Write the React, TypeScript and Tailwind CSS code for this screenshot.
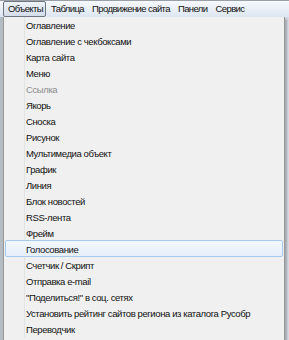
const topMenu = ["Объекты", "Таблица", "Продвижение сайта", "Панели", "Сервис"];

const items = [
  { label: "Оглавление" },
  { label: "Оглавление с чекбоксами" },
  { label: "Карта сайта" },
  { label: "Меню" },
  { label: "Ссылка", disabled: true },
  { label: "Якорь" },
  { label: "Сноска" },
  { label: "Рисунок" },
  { label: "Мультимедиа объект" },
  { label: "График" },
  { label: "Линия" },
  { label: "Блок новостей" },
  { label: "RSS-лента" },
  { label: "Фрейм" },
  { label: "Голосование", hover: true },
  { label: "Счетчик / Скрипт" },
  { label: "Отправка e-mail" },
  { label: "\"Поделиться!\" в соц. сетях" },
  { label: "Установить рейтинг сайтов региона из каталога Русобр" },
  { label: "Переводчик" },
];

export default function App() {
  return (
    <div
      className="h-[340px] w-[289px] overflow-hidden bg-[#c9cdd2] text-[9.5px] tracking-[-0.4px] text-[#111]"
      style={{ fontFamily: '"Liberation Sans", Arial, sans-serif' }}
    >
      <div className="flex h-[17px] items-center border-t border-[#9aa0a8] bg-gradient-to-b from-[#f6f9fd] to-[#dde6f1] pl-[3px] tracking-[-0.6px]">
        {topMenu.map((m, i) => (
          <div
            key={m}
            className={
              i === 0
                ? "mr-[1px] flex h-[16px] items-center whitespace-nowrap rounded-[2px] border border-[#6f7680] bg-gradient-to-b from-[#eef3f9] to-[#d3dde9] pl-[4px] pr-[2px] leading-none"
                : "flex h-[16px] items-center whitespace-nowrap px-[4px] leading-none"
            }
          >
            {m}
          </div>
        ))}
      </div>

      <div className="flex">
        <div className="w-[3px] shrink-0 bg-[#b6bcc4]" />
        <div className="relative flex w-[282px] shrink-0 border border-t-0 border-[#979797] bg-[#f0f0f0] pb-[2px] shadow-[2px_2px_2px_rgba(0,0,0,0.25)]">
          <div className="absolute left-[1px] right-[1px] top-[223px] h-[17px] rounded-[2px] border border-[#a8c8ec] bg-gradient-to-b from-[#f2f7fd] to-[#e6effa]" />
          <div className="w-[21px] shrink-0 border-r border-[#e2e3e3]" />
          <div className="relative flex flex-1 flex-col pt-[1px]">
            {items.map((it) => (
              <div
                key={it.label}
                className={
                  "flex h-[16px] items-center whitespace-nowrap pl-[1px] leading-none " +
                  (it.disabled ? "text-[#8d8d8d]" : "")
                }
              >
                {it.label}
              </div>
            ))}
          </div>
        </div>
        <div className="flex-1 bg-[#d7dde3]" />
      </div>
    </div>
  );
}
